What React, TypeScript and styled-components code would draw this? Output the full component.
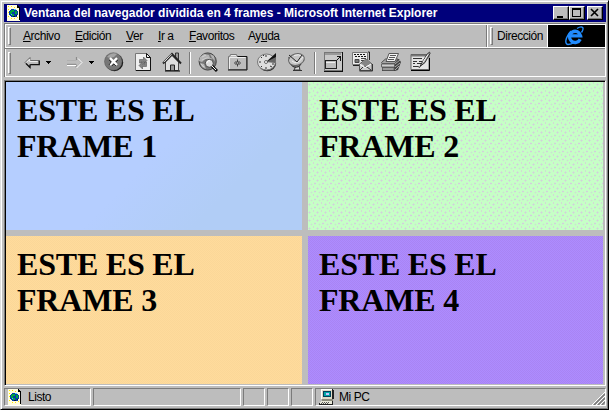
import React from 'react';
import styled, { createGlobalStyle } from 'styled-components';

const face = '#bdbdbd';
const shade = '#7b7b7b';

const GlobalStyle = createGlobalStyle`
  * { box-sizing: border-box; }
  body { margin: 0; background: ${face}; overflow: hidden; }
`;

const Window = styled.main`
  width: 609px;
  height: 410px;
  padding: 2px;
  background: ${face};
  border: 1px solid;
  border-color: #dedede #000 #000 #dedede;
  box-shadow: inset 1px 1px #fff, inset -1px -1px ${shade};
  font: 12px/14px "Liberation Sans", Arial, sans-serif;
  letter-spacing: -0.45px;
  color: #000;
`;

const Inner = styled.div`
  display: flex;
  flex-direction: column;
  height: 403px;
  margin: 1px 0 0 1px;
  width: 602px;
`;

const TitleBar = styled.header`
  display: flex;
  align-items: center;
  height: 18px;
  padding: 0 3px 0 3px;
  background: #00007b;
  color: #fff;
`;

const Title = styled.h1`
  flex: 1;
  margin: 0 0 0 4px;
  font: bold 12px/18px "Liberation Sans", Arial, sans-serif;
  letter-spacing: 0;
  white-space: nowrap;
`;

const Controls = styled.div`
  display: flex;
`;

const ControlButton = styled.button<{ $gap?: boolean }>`
  width: 16px;
  height: 14px;
  padding: 0;
  margin-left: ${p => (p.$gap ? 2 : 0)}px;
  border: 1px solid;
  border-color: #fff #000 #000 #fff;
  box-shadow: inset -1px -1px ${shade};
  background: ${face};
  svg { display: block; }
`;

const Bands = styled.section`
  height: 54px;
  margin-top: 1px;
  border: 1px solid ${shade};
  border-right-color: #fff;
  border-bottom: 0;
`;

const MenuRow = styled.div`
  display: flex;
  height: 24px;
  border-top: 1px solid #fff;
  border-left: 1px solid #fff;
  border-bottom: 1px solid #fff;
`;

const MenuBand = styled.nav`
  display: flex;
  align-items: center;
  width: 480px;
  padding-left: 2px;
`;

const Grip = styled.i<{ $h: number }>`
  width: 3px;
  height: ${p => p.$h}px;
  border: 1px solid;
  border-color: #fff ${shade} ${shade} #fff;
`;

const MenuItem = styled.span<{ $w: number }>`
  width: ${p => p.$w}px;
  white-space: nowrap;
  line-height: 22px;
  u { text-underline-offset: 1px; }
`;

const MenuItems = styled.div`
  display: flex;
  margin-left: 12px;
`;

const AddressBand = styled.div`
  display: flex;
  align-items: center;
  width: 62px;
  padding-left: 3px;
  border-left: 1px solid ${shade};
  border-right: 1px solid #fff;
  gap: 4px;
  box-shadow: inset 1px 0 #fff;
`;

const Brand = styled.div`
  display: flex;
  flex: 1;
  height: 22px;
  background: #000;
  svg { margin-left: 17px; }
`;

const Toolbar = styled.div`
  display: flex;
  align-items: center;
  height: 29px;
  padding-left: 3px;
  border-top: 1px solid ${shade};
  border-bottom: 1px solid #fff;
  box-shadow: inset 1px 0 #fff;
`;

const Icon = styled.svg<{ $gap: number }>`
  flex: none;
  margin: -2px 0 0 ${p => p.$gap}px;
`;

const Separator = styled.i<{ $gap: number }>`
  width: 2px;
  height: 22px;
  margin-left: ${p => p.$gap}px;
  border-left: 1px solid ${shade};
  border-right: 1px solid #fff;
`;

const FrameArea = styled.section`
  height: 306px;
  margin-top: 3px;
  padding: 1px 0 0 1px;
  border: 1px solid ${shade};
  border-right-color: #fff;
  border-bottom-color: #fff;
  box-shadow: inset 1px 1px #000;
`;

const FrameGrid = styled.div`
  display: grid;
  grid-template-columns: 296px 295px;
  grid-template-rows: 148px 148px;
  gap: 6px;
`;

const Pane = styled.article<{ $fill: string; $size?: string }>`
  padding: 10px 10px 10px 11px;
  background: ${p => p.$fill};
  background-size: ${p => p.$size ?? 'auto'};
`;

const Heading = styled.h2`
  margin: 0;
  width: 200px;
  font: bold 32px/36px "Liberation Serif", "Times New Roman", serif;
  letter-spacing: -0.2px;
`;

const StatusBar = styled.footer`
  display: flex;
  gap: 2px;
  height: 19px;
  margin-top: 2px;
`;

const StatusCell = styled.div<{ $w?: number }>`
  display: flex;
  align-items: center;
  position: relative;
  width: ${p => (p.$w ? `${p.$w}px` : 'auto')};
  flex: ${p => (p.$w ? 'none' : 1)};
  height: 18px;
  padding-left: 3px;
  border: 1px solid;
  border-color: ${shade} #fff #fff ${shade};
`;

const StatusText = styled.span<{ $gap: number }>`
  margin-left: ${p => p.$gap}px;
`;

const SizeGrip = styled.svg`
  position: absolute;
  right: 0;
  bottom: 0;
`;

const dots = [
  'radial-gradient(circle at 1.5px 2.5px, #d3cddc 0.8px, transparent 1.2px)',
  'radial-gradient(circle at 5.5px 1px, #d3d9d5 0.7px, transparent 1.1px)',
  'radial-gradient(circle at 3.5px 6.5px, #ceddd3 0.7px, transparent 1.1px)',
  'radial-gradient(circle at 7px 5.5px, #d3cddc 0.7px, transparent 1.2px)',
  '#c6ffc6',
].join(',');

const weave = (a: string, b: string) =>
  `conic-gradient(${a} 25%, ${b} 0 50%, ${a} 0 75%, ${b} 0)`;

const frames = [
  { n: 1, fill: 'linear-gradient(135deg, #b5ceff 50%, #b1cdf6 75%)' },
  { n: 2, fill: dots, size: '8px 8px' },
  { n: 3, fill: weave('#ffdb9c', '#fad798'), size: '2px 2px' },
  { n: 4, fill: weave('#ad8cff', '#a984f3'), size: '2px 2px' },
];

const menus = [
  { k: '', u: 'A', r: 'rchivo', w: 52 },
  { k: '', u: 'E', r: 'dición', w: 51 },
  { k: '', u: 'V', r: 'er', w: 32 },
  { k: '', u: 'I', r: 'r a', w: 31 },
  { k: '', u: 'F', r: 'avoritos', w: 59 },
  { k: 'Ay', u: 'u', r: 'da', w: 40 },
];

const PageIcon = () => (
  <svg width="13" height="16" viewBox="0 0 13 16" shapeRendering="crispEdges">
    <path d="M0 0h10l3 3v13H0z" fill="#fffde0" />
    <path d="M0 15h13V3h-1v12H0zM10 0v3h3z" fill="#000" />
    <path d="M1 1h1M4 1h1M7 2h1M1 4h1M1 7h1M1 11h1M4 13h1M7 13h1M10 12h1" transform="translate(0 .5)" stroke="#ffe600" />
    <path d="M4 4h5v1h1v1h1v4h-1v2H4v-1H3v-1H2V6h1V5h1z" fill="#003fa5" />
    <path d="M4 5h3v2H5v2H3V6h1zM8 6h2v3H8zM5 9h2v2H5z" fill="#00a53f" />
    <path d="M7 4h2v1H7zM4 9h1v1H4z" fill="#4cc6ff" />
    <path d="M9 10h1v1H8v1H6v-1h3z" fill="#001040" />
  </svg>
);

const ComputerIcon = () => (
  <svg width="16" height="16" viewBox="0 0 16 16" shapeRendering="crispEdges">
    <path d="M3 0h10l2 1v9l-2 1H3z" fill="#222" />
    <path d="M2 0h11v10H2z" fill="#fff" />
    <path d="M3 1h10v9H3z" fill="#dedbc6" />
    <path d="M4 2h8v6H4z" fill="#00405a" />
    <path d="M5 3h6v4H5z" fill="#00a5a5" />
    <path d="M7 4h3v2H7z" fill="#c6c6ff" />
    <path d="M3 10h11v2H3z" fill="#8b8b7b" />
    <path d="M2 12h12v3l-1 1H0v-2z" fill="#222" />
    <path d="M2 12h11v1H2zM1 13h12v2H1z" fill="#e8e8d8" />
    <path d="M3 13h1v1H3zM5 13h1v1H5zM7 13h1v1H7zM9 13h1v1H9zM2 14h1v1H2zM4 14h1v1H4zM6 14h1v1H6zM8 14h1v1H8z" fill="#555" />
  </svg>
);

const Caret = ({ gap }: { gap: number }) => (
  <Icon $gap={gap} width="5" height="20" viewBox="0 0 5 20" shapeRendering="crispEdges">
    <path d="M0 9h5v1H4v1H3v1H2v-1H1v-1H0z" />
  </Icon>
);

const ToolIcons = () => (
  <>
    <Icon $gap={13} width="17" height="22" viewBox="0 0 17 22">
      <path d="M1 11.5l5-5v3h9v4H6v3z" fill="#bdbdbd" stroke="#6b6b6b" />
      <path d="M2.5 11.3l3.2-3.2v2.4h8" fill="none" stroke="#eee" />
      <path d="M6.5 13.7h8.8V9.5M2 12.5l4 4v-3" fill="none" stroke="#111" strokeWidth="1.2" />
    </Icon>
    <Caret gap={5} />
    <Icon $gap={16} width="16" height="22" viewBox="0 0 16 22">
      <path d="M0 9.5h9V6.5l5 5-5 5v-3H0" fill="#bdbdbd" stroke="#b0b0b0" />
      <path d="M9.5 6v3M0 13.3h9v3" fill="none" stroke="#8b8b8b" />
      <path d="M0 14.5h9M9.5 17l5.5-5.5-4-4" fill="none" stroke="#fff" />
    </Icon>
    <Caret gap={6} />
    <Icon $gap={10} width="20" height="20" viewBox="0 0 20 20">
      <circle cx="10.4" cy="10.4" r="8.8" fill="#181818" />
      <circle cx="9.3" cy="9.5" r="8.8" fill="#777" stroke="#555" strokeWidth=".5" />
      <path d="M3 5a8 8 0 0 1 10-3l-3 3-4 1z" fill="#a5a5a5" />
      <path d="M6 6l7 7M13 6l-7 7" stroke="#fff" strokeWidth="2.2" />
      <path d="M5 8l2 2-2 3M8 14l2-2 2 2M14 8l-2 2" fill="none" stroke="#333" />
    </Icon>
    <Icon $gap={10} width="18" height="20" viewBox="0 0 18 20">
      <path d="M1.5 1.5h11l4 4v13h-15z" fill="#efefef" stroke="#777" />
      <path d="M2 18.5h14.5V5.5h-4v-4l4 4" fill="none" stroke="#111" />
      <path d="M5.5 11V7.5h4V5l3.5 3.5L9.500 12V9.500h-2V11z" fill="#858585" stroke="#444" strokeWidth=".5" />
      <path d="M12.500 10v4.500h-4V17L5 13.500 8.500 10v2.500h2V10z" fill="#858585" stroke="#444" strokeWidth=".5" />
    </Icon>
    <Icon $gap={10} width="20" height="20" viewBox="0 0 20 20">
      <path d="M13.500 6V1h3v8" fill="#999" stroke="#333" />
      <path d="M3.500 10L10 3.500l6.500 6.500v8.500h-13z" fill="#dedede" stroke="#444" />
      <path d="M1 11.500L10 2l9 9.500" fill="none" stroke="#222" strokeWidth="1.900" />
      <path d="M2 10.200l7.500-8" stroke="#e5e5e5" />
      <path d="M8.500 18.500V13h4v5.500" fill="#999" stroke="#222" />
      <path d="M3 19h15" stroke="#000" />
    </Icon>
    <Separator $gap={7} />
    <Icon $gap={7} width="20" height="20" viewBox="0 0 20 20">
      <circle cx="9.700" cy="9.500" r="8.600" fill="#777" stroke="#444" />
      <path d="M2 5l4-3 5 1 1 3-5 1-3 3-3-1zM12 2l4 2 1 5-3-3zM2 11l4 1 2 5-4-2z" fill="#b5b5b5" />
      <path d="M4 5l4-2M4 8l5-2 5 1M3 12l3 3" stroke="#ddd" fill="none" strokeWidth=".7" />
      <path d="M14 14l5 5" stroke="#111" strokeWidth="3" />
      <circle cx="11.300" cy="11.300" r="4" fill="#dadada" stroke="#4a4a4a" />
      <path d="M9 11a2 2 0 0 1 3-2M14 14l4 4" stroke="#fff" fill="none" />
    </Icon>
    <Icon $gap={9} width="21" height="20" viewBox="0 0 21 20">
      <path d="M1.500 17.500v-13h1l1-2h6l1 2h9v13z" fill="#bdbdbd" stroke="#777" />
      <path d="M2.500 17V5.500h16M4 3.500h5" fill="none" stroke="#eee" />
      <path d="M10.500 4.500h9.500v13.500H1" fill="none" stroke="#111" />
      <path d="M10.500 7.500v7M7 11h7M8.500 9l4 4M12.500 9l-4 4" stroke="#333" strokeWidth=".9" />
      <path d="M10 10.500h1v1h-1z" fill="#fff" />
    </Icon>
    <Icon $gap={9} width="20" height="20" viewBox="0 0 20 20">
      <ellipse cx="10.300" cy="11.500" rx="8.800" ry="7.800" fill="#333" />
      <ellipse cx="9.500" cy="10" rx="9" ry="8" fill="#dedede" stroke="#777" />
      <path d="M9 10l10-7v4l-1 4z" fill="#666" />
      <path d="M9 10L19 1v4z" fill="#111" />
      <path d="M9 3v2M9 15v2M2 10h2M15 12h2M4 5l1 1M4 15l1-1M13 14l2 1M6 3l1 1" stroke="#333" />
      <circle cx="9" cy="10" r="1.500" fill="#fff" stroke="#333" strokeWidth=".7" />
    </Icon>
    <Icon $gap={10} width="20" height="20" viewBox="0 0 20 20">
      <path d="M9 14h3l1 4H7zM6 18.500h9" fill="#ddd" stroke="#333" />
      <path d="M2 5q0 8 5 10 5 1 7-3" fill="#858585" stroke="#222" />
      <ellipse cx="9.500" cy="7.500" rx="8" ry="5.800" transform="rotate(-17 9.500 7.500)" fill="#c6c6c6" stroke="#666" />
      <path d="M5 9q5 5 11-4M7 3.500q5-2 8 1" fill="none" stroke="#eee" />
      <path d="M2 3l8 7 5-7" fill="none" stroke="#222" />
    </Icon>
    <Separator $gap={7} />
    <Icon $gap={7} width="20" height="21" viewBox="0 0 20 21" shapeRendering="crispEdges">
      <path d="M1 1h18v18H1z" fill="#c9c9c9" stroke="#777" />
      <path d="M2 2h16v2H2z" fill="#999" />
      <path d="M2 9h11v8H2z" fill="#bdbdbd" stroke="#222" />
      <path d="M2 9.500h11" stroke="#222" />
      <path d="M3 11.500h9" stroke="#eee" />
      <path d="M14 9l3-3M14 5.500h3.500v4M1 20h18.500V1" fill="none" stroke="#111" />
    </Icon>
    <Icon $gap={9} width="22" height="21" viewBox="0 0 22 21">
      <path d="M.5 1.500h15v12H.5z" fill="#ededed" stroke="#777" />
      <path d="M2 3.500h12M3 5.500h11" stroke="#111" strokeDasharray="2 1" />
      <path d="M3 8.500h4v3H3zM9 7.500h5M9 9.500h4" fill="#777" stroke="#444" />
      <path d="M16 1h1.500v8M1 14.500h6" fill="none" stroke="#222" />
      <path d="M7.500 13l6.500-5 6 5v6.500H7.500z" fill="#ccc" stroke="#555" />
      <path d="M9 12.500l5 3 5.500-3-5.500-4.500z" fill="#858585" />
      <path d="M8 19l4-4 3 1 4 3M7.500 20h13v-7" fill="none" stroke="#333" />
      <path d="M8 13.500l5 3 6-3.500" stroke="#fff" fill="none" />
    </Icon>
    <Icon $gap={7} width="21" height="20" viewBox="0 0 21 20">
      <path d="M1 10l4-3h13l2 3-3 8-3 1H1z" fill="#404040" />
      <path d="M.5 10.500l4-3.500h12.500l-3 4.500H1z" fill="#a5a5a5" stroke="#555" />
      <path d="M5 9.500l3-8h9.500l-3.500 8z" fill="#f3f3f3" stroke="#555" />
      <path d="M9 3.500h6M8 5.500h6M7 7.500h6" stroke="#555" />
      <path d="M.5 12h13v3H.5zM1.500 16h11.500v2H1.500z" fill="#cecece" stroke="#666" />
      <path d="M14 12l5-4M14 15l5-4M14 18l4-4" stroke="#aaa" />
    </Icon>
    <Icon $gap={8} width="22" height="21" viewBox="0 0 22 21">
      <path d="M1 3.500h18v15H1z" fill="#e4e4e4" stroke="#666" />
      <path d="M1 4h18v1.500H1z" fill="#777" />
      <path d="M3 7.500h9M3 10.500h4M9 10.500h3M3 12.500h2M7 12.500h4" stroke="#333" />
      <path d="M1 19.500h18.500V7" fill="none" stroke="#000" />
      <path d="M10 15.500l2-4 5-8q3-4 3-1l-5 9z" fill="#aaa" stroke="#222" strokeWidth=".9" />
      <path d="M13 11l5-7.500" stroke="#fff" />
      <path d="M3 15.500h5l2 1" fill="none" stroke="#333" />
    </Icon>
  </>
);

const BrandIcon = () => (
  <svg width="20" height="22" viewBox="0 0 20 22">
    <path d="M15.200 14.200A5.600 5.600 0 1 1 15.600 10.800H6" fill="none" stroke="#218cff" strokeWidth="3.300" />
    <path d="M12 3.500C17 .5 20 2 16.500 7.500M6 6C0 13-.5 19 3 19.500q3 0 7-2.500" fill="none" stroke="#218cff" strokeWidth="1.400" />
  </svg>
);

export default function App() {
  return (
    <>
      <GlobalStyle />
      <Window>
        <Inner>
          <TitleBar>
            <PageIcon />
            <Title>Ventana del navegador dividida en 4 frames - Microsoft Internet Explorer</Title>
            <Controls>
              <ControlButton aria-label="Minimizar">
                <svg width="14" height="12"><path d="M3 9h6v2H3z" /></svg>
              </ControlButton>
              <ControlButton aria-label="Maximizar">
                <svg width="14" height="12" shapeRendering="crispEdges"><path d="M2 1h9v9H2zM3 3v6h7V3z" fillRule="evenodd" /></svg>
              </ControlButton>
              <ControlButton $gap aria-label="Cerrar">
                <svg width="14" height="12"><path d="M3 2l7 7M10 2l-7 7" stroke="#000" strokeWidth="1.6" /></svg>
              </ControlButton>
            </Controls>
          </TitleBar>
          <Bands>
            <MenuRow>
              <MenuBand>
                <Grip $h={18} />
                <MenuItems>
                  {menus.map(m => (
                    <MenuItem key={m.u} $w={m.w}>{m.k}<u>{m.u}</u>{m.r}</MenuItem>
                  ))}
                </MenuItems>
              </MenuBand>
              <AddressBand>
                <Grip $h={18} />
                <span>Dirección</span>
              </AddressBand>
              <Brand><BrandIcon /></Brand>
            </MenuRow>
            <Toolbar>
              <Grip $h={22} />
              <ToolIcons />
            </Toolbar>
          </Bands>
          <FrameArea>
            <FrameGrid>
              {frames.map(f => (
                <Pane key={f.n} $fill={f.fill} $size={f.size}>
                  <Heading>ESTE ES EL<br />FRAME {f.n}</Heading>
                </Pane>
              ))}
            </FrameGrid>
          </FrameArea>
          <StatusBar>
            <StatusCell $w={87}><PageIcon /><StatusText $gap={7}>Listo</StatusText></StatusCell>
            <StatusCell $w={148} />
            <StatusCell $w={22} />
            <StatusCell $w={22} />
            <StatusCell $w={22} />
            <StatusCell>
              <ComputerIcon /><StatusText $gap={4}>Mi PC</StatusText>
              <SizeGrip width="13" height="13" viewBox="0 0 13 13">
                <path d="M0 13L13 0M4 13l9-9M8 13l5-5" stroke="#fff" />
                <path d="M2 13L13 2M6 13l7-7M10 13l3-3" stroke={shade} strokeWidth="1.5" />
              </SizeGrip>
            </StatusCell>
          </StatusBar>
        </Inner>
      </Window>
    </>
  );
}
